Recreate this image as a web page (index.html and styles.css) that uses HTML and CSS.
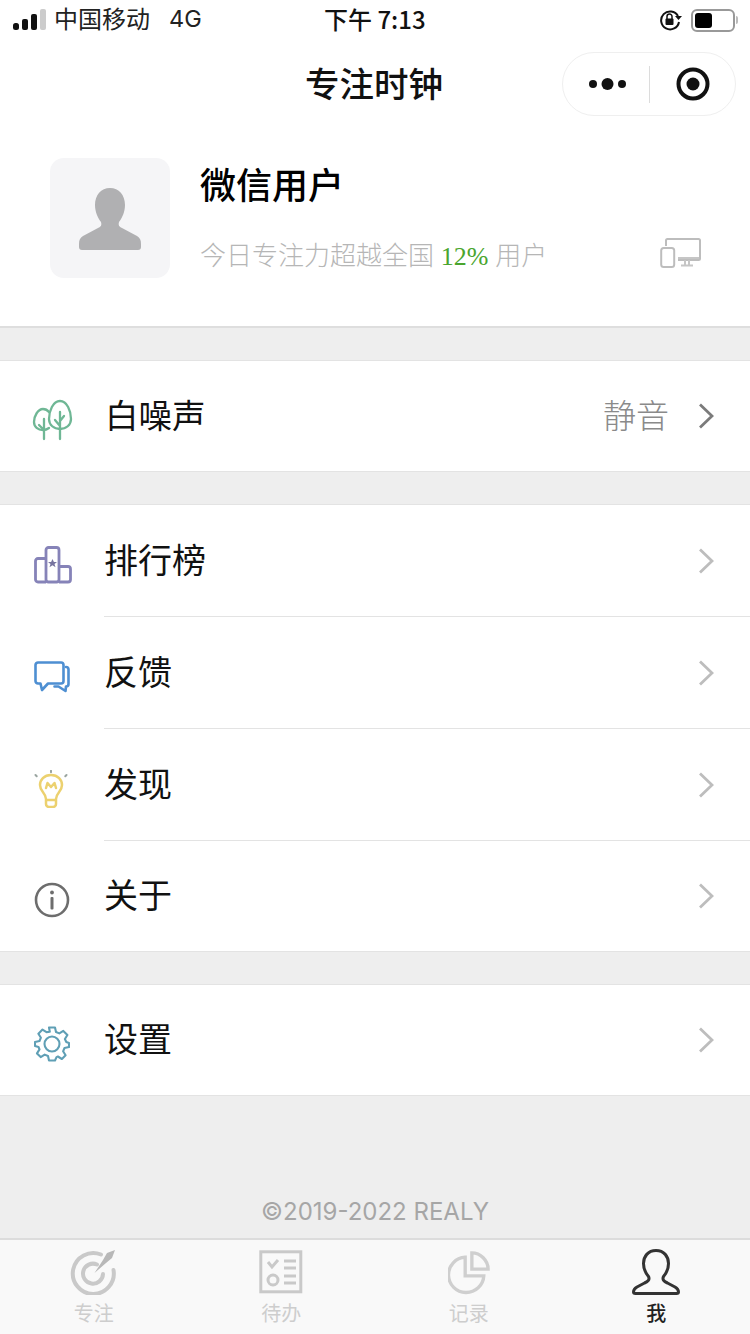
FILE: index.html
```html
<!DOCTYPE html>
<html lang="zh">
<head>
<meta charset="utf-8">
<title>专注时钟</title>
<link rel="stylesheet" href="styles.css">
</head>
<body>
<div class="page">
  <header class="status">
    <div class="status-left">
      <svg class="signal" width="34" height="22" viewBox="0 0 34 22"><rect x="0" y="14" width="6" height="7" rx="2.5" fill="#111"/><rect x="9" y="10" width="6" height="11" rx="2" fill="#111"/><rect x="18" y="5" width="6" height="16" rx="2" fill="#111"/><rect x="27" y="0" width="6" height="21" rx="2" fill="#ccc"/></svg>
      <span class="carrier">中国移动</span><span class="net">4G</span>
    </div>
    <span class="clock">下午 7:13</span>
    <div class="status-right">
      <svg width="24" height="22" viewBox="0 0 24 22"><path d="M19 7A9 9 0 1 0 20 13" fill="none" stroke="#111" stroke-width="2"/><path d="M16 7h7l-3.500 4z" fill="#111"/><rect x="6.500" y="9.500" width="8" height="6.500" rx="1" fill="#111"/><path d="M8 10V7.500a2.500 2.500 0 0 1 5 0V10" fill="none" stroke="#111" stroke-width="1.500"/></svg>
      <div class="battery"><div class="battery-fill"></div></div><div class="battery-tip"></div>
    </div>
  </header>
  <nav class="nav">
    <h1 class="nav-title">专注时钟</h1>
    <div class="capsule">
      <svg width="40" height="16" viewBox="0 0 40 16"><circle cx="5" cy="8" r="4" fill="#111"/><circle cx="19.500" cy="8" r="6" fill="#111"/><circle cx="34" cy="8" r="4" fill="#111"/></svg>
      <span class="capsule-line"></span>
      <svg width="34" height="34" viewBox="0 0 34 34"><circle cx="17" cy="17" r="14.500" fill="none" stroke="#111" stroke-width="4"/><circle cx="17" cy="17" r="6.500" fill="#111"/></svg>
    </div>
  </nav>
  <section class="profile">
    <div class="avatar">
      <svg width="62" height="62" viewBox="0 0 62 62"><path d="M31 0c9 0 15 7 15 17 0 7-3 13-6 17-1 3 0 5 3 6l15 8c3 2 4 4 4 8v3c0 2-1 3-3 3H3c-2 0-3-1-3-3v-3c0-4 1-6 4-8l15-8c3-1 4-3 3-6-3-4-6-10-6-17C16 7 22 0 31 0z" fill="#b0b0b2"/></svg>
    </div>
    <div class="profile-info">
      <div class="name">微信用户</div>
      <div class="sub">今日专注力超越全国 <span class="pct">12%</span> 用户</div>
    </div>
    <svg class="devices" width="42" height="32" viewBox="0 0 42 32"><path d="M6 8V2.500a1.500 1.500 0 0 1 1.500-1.500h31A1.500 1.500 0 0 1 40 2.500v18a1.500 1.500 0 0 1-1.500 1.500H18" fill="none" stroke="#bdbdbd" stroke-width="2"/><rect x="1.200" y="10" width="13" height="19" rx="2.500" fill="#fff" stroke="#bdbdbd" stroke-width="2"/><path d="M18 20h21M21 27.500h12M25 22v5M29 22v5" stroke="#c6c6c6" stroke-width="2" fill="none"/></svg>
  </section>
  <section class="group">
    <div class="row row-wide">
      <svg class="icon icon-tree" width="42" height="42" viewBox="0 0 42 42"><g fill="none" stroke="#6fb795" stroke-width="2.300" stroke-linecap="round" stroke-linejoin="round"><path d="M28 2C21 2 17 12 17 20c0 6 5 10 11 10s11-4 11-10C39 12 35 2 28 2z"/><path d="M28 13v27M28 27l-5-6M28 22l4-5"/><path d="M17 13c-2-2.500-4-3-6-3C6 10 2 17 2 23c0 5 4 8 9 8 2 0 4-.5 6-2"/><path d="M12 20v20M12 31l-5-5"/></g></svg>
      <span class="label label-noise">白噪声</span>
      <span class="value">静音</span>
      <svg class="chev chev-dark" width="16" height="26" viewBox="0 0 16 26"><path d="M2 1.500 14 13 2 24.500" fill="none" stroke="currentColor" stroke-width="2.800"/></svg>
    </div>
  </section>
  <section class="group">
    <div class="row">
      <svg class="icon" width="38" height="38" viewBox="0 0 38 38"><g fill="none" stroke="#8683b8" stroke-width="2.800" stroke-linejoin="round"><path d="M12 36H4a2.500 2.500 0 0 1-2.500-2.500V15A2.500 2.500 0 0 1 4 12.500h8"/><rect x="12" y="1.500" width="13" height="34.500" rx="2.500"/><path d="M25 20.500h9a2.500 2.500 0 0 1 2.500 2.500v10.500A2.500 2.500 0 0 1 34 36h-9"/></g><path d="m18.500 13 1.400 3h3.100l-2.500 2 1 3.200-3-1.900-3 1.900 1-3.200-2.500-2h3.100z" fill="#77749f"/></svg>
      <span class="label">排行榜</span>
      <div class="row-line"></div>
      <svg class="chev" width="16" height="26" viewBox="0 0 16 26"><path d="M2 1.500 14 13 2 24.500" fill="none" stroke="currentColor" stroke-width="2.800"/></svg>
    </div>
    <div class="row">
      <svg class="icon" width="36" height="32" viewBox="0 0 36 32"><g fill="none" stroke="#4e8fd2" stroke-width="2.600" stroke-linejoin="round" stroke-linecap="round"><path d="M4 1.500h23A2.500 2.500 0 0 1 29.500 4v16a2.500 2.500 0 0 1-2.500 2.500H14L8 29l-1.500-6.500H4A2.500 2.500 0 0 1 1.500 20V4A2.500 2.500 0 0 1 4 1.500z"/><path d="M32 6a2.500 2.500 0 0 1 2.500 2.500V23a2.500 2.500 0 0 1-2.500 2.500l-.5 4.500-7-4.500h-4"/></g></svg>
      <span class="label">反馈</span>
      <div class="row-line"></div>
      <svg class="chev" width="16" height="26" viewBox="0 0 16 26"><path d="M2 1.500 14 13 2 24.500" fill="none" stroke="currentColor" stroke-width="2.800"/></svg>
    </div>
    <div class="row">
      <svg class="icon" width="34" height="38" viewBox="0 0 34 38"><g fill="none" stroke="#ecd16f" stroke-width="2.500" stroke-linecap="round" stroke-linejoin="round"><path d="M17 5C10 5 6 10 6 15c0 7 6 8 6 14v5a3 3 0 0 0 3 3h4a3 3 0 0 0 3-3v-5c0-6 6-7 6-14 0-5-4-10-11-10z"/><path d="M12 18l1.500-5 3.500 4 3.500-4 1.500 5"/><path d="M12.500 30h9"/></g><g stroke="#9aa5a0" stroke-width="2" stroke-linecap="round"><path d="M17 .8v1.400M1.500 5l1.200 1.200M32.500 5l-1.200 1.200"/></g></svg>
      <span class="label">发现</span>
      <div class="row-line"></div>
      <svg class="chev" width="16" height="26" viewBox="0 0 16 26"><path d="M2 1.500 14 13 2 24.500" fill="none" stroke="currentColor" stroke-width="2.800"/></svg>
    </div>
    <div class="row row-wide">
      <svg class="icon" width="36" height="36" viewBox="0 0 36 36"><circle cx="18" cy="18" r="16" fill="none" stroke="#6d6d6d" stroke-width="2.600"/><circle cx="18" cy="10.500" r="1.900" fill="#6d6d6d"/><rect x="16.500" y="15" width="3" height="12.500" rx="1" fill="#6d6d6d"/></svg>
      <span class="label">关于</span>
      <svg class="chev" width="16" height="26" viewBox="0 0 16 26"><path d="M2 1.500 14 13 2 24.500" fill="none" stroke="currentColor" stroke-width="2.800"/></svg>
    </div>
  </section>
  <section class="group">
    <div class="row row-wide">
      <svg class="icon" width="36" height="36" viewBox="0 0 36 36"><g fill="none" stroke="#5f9fb5" stroke-width="2.100" stroke-linejoin="round"><path d="M15 1.500h6l1 4.500 3.300 1.400 4-2.500 4.100 4.100-2.500 4L32.300 16l2.700 1v4l-4.500 1-1.400 3.300 2.500 4-3.700 3.700-4-2.500-1.400.6L21 34.500h-6l-1-4.500-3.300-1.400-4 2.500-3.700-3.700 2.500-4L4.500 21 1 20v-4l4.500-1 1.400-3.300-2.500-4 4.100-4.100 4 2.500L15.800 5.700z"/><circle cx="18" cy="18" r="7.500"/></g></svg>
      <span class="label">设置</span>
      <svg class="chev" width="16" height="26" viewBox="0 0 16 26"><path d="M2 1.500 14 13 2 24.500" fill="none" stroke="currentColor" stroke-width="2.800"/></svg>
    </div>
  </section>
  <footer class="foot">©2019-2022 REALY</footer>
  <div class="tabbar">
    <div class="tab">
      <svg width="48" height="46" viewBox="0 0 48 46"><g fill="none" stroke="#c9c9c9" stroke-width="4" stroke-linecap="round"><path d="M31 5.500A20.500 20.500 0 1 0 43.500 21"/><path d="M27 15.500A10 10 0 1 0 33 25"/></g><path d="M24.500 24 33 11l4-7 8-3-3 8-6 5z" fill="#b8b8b8"/></svg>
      <span class="tab-text">专注</span>
    </div>
    <div class="tab">
      <svg width="44" height="44" viewBox="0 0 44 44"><rect x="1.800" y="1.800" width="40" height="40" fill="none" stroke="#c9c9c9" stroke-width="3"/><g fill="none" stroke="#c9c9c9" stroke-width="3"><path d="M9 12l4 5 6-7"/><circle cx="14" cy="30" r="5"/><path d="M25 11h12M25 18h12M25 26h12M25 33h12"/></g></svg>
      <span class="tab-text">待办</span>
    </div>
    <div class="tab">
      <svg width="42" height="42" viewBox="0 0 44 44"><g fill="none" stroke="#cfcfcf" stroke-width="3.500"><path d="M18 6.500A18.500 18.500 0 1 0 37.500 26H18z"/><path d="M25 2c9 0 17 8 17 17H25z"/></g></svg>
      <span class="tab-text">记录</span>
    </div>
    <div class="tab tab-on">
      <svg width="48" height="46" viewBox="0 0 48 46"><path d="M24 1.500c-8 0-12.500 6-12.500 13 0 5 2.500 10 5 13 1.500 3-.5 5-4 6.500l-7.500 4C2.500 39.500 1.500 41.500 1.500 43c0 1 .5 1.500 2 1.500h41c1.500 0 2-.5 2-1.500 0-1.500-1-3.500-3.500-5l-7.500-4c-3.500-1.500-5.500-3.500-4-6.500 2.500-3 5-8 5-13 0-7-4.500-13-12.500-13z" fill="none" stroke="#333" stroke-width="3"/></svg>
      <span class="tab-text">我</span>
    </div>
  </div>
</div>
</body>
</html>
```
FILE: styles.css
```css
* { box-sizing: border-box; }
html, body { margin: 0; padding: 0; }
body { font-family: "Liberation Sans", "Noto Sans CJK SC", sans-serif; color: #111; background: #ededed; }
.page { width: 750px; height: 1334px; display: flex; flex-direction: column; overflow: hidden; background: #eee; }

.status { height: 42px; background: #fff; display: flex; align-items: center; justify-content: space-between; padding: 0 12px 2px 13px; position: relative; flex: none; }
.status-left { display: flex; align-items: center; font-size: 24px; color: #222; width: 270px; }
.signal { margin-right: 7px; }
.carrier { font-family: "Noto Sans CJK SC", sans-serif; line-height: 30px; margin-top: -4px; }
.net { margin-left: 19px; font-family: Inter, "Liberation Sans", sans-serif; font-size: 23.5px; line-height: 30px; margin-top: -2px; }
.clock { font-family: "Noto Sans CJK SC", "Liberation Sans", sans-serif; font-size: 24px; color: #111; position: absolute; left: 324px; top: 1px; line-height: 36px; font-weight: 500; }
.status-right { display: flex; align-items: center; }
.battery { width: 44px; height: 23px; border: 2px solid #999; border-radius: 6px; padding: 2px; margin-left: 8px; }
.battery-fill { width: 17px; height: 15px; background: #000; border-radius: 3px; }
.battery-tip { width: 2px; height: 8px; background: #bbb; margin-left: 1px; border-radius: 0 2px 2px 0; }

.nav { height: 88px; background: #fff; display: flex; align-items: center; justify-content: center; position: relative; flex: none; }
.nav-title { margin: 0 2px 8px 0; font-family: "Noto Sans CJK SC", sans-serif; font-size: 34.5px; font-weight: 500; color: #111; line-height: 48px; }
.capsule { position: absolute; left: 562px; top: 10px; width: 174px; height: 64px; border: 1px solid #efefef; border-radius: 32px; background: #fff; display: flex; align-items: center; padding-left: 25px; }
.capsule-line { width: 1px; height: 37px; background: #dcdcdc; margin: 0 26px 0 21px; }

.profile { height: 198px; background: #fff; border-bottom: 2px solid #dedede; padding: 0 50px 20px; display: flex; align-items: center; position: relative; flex: none; }
.avatar { width: 120px; height: 120px; border-radius: 14px; background: #f5f5f7; display: flex; align-items: center; justify-content: center; padding-top: 2px; flex: none; }
.profile-info { margin-left: 30px; flex: 1; }
.name { font-family: "Noto Sans CJK SC", sans-serif; font-size: 36px; font-weight: 500; color: #000; line-height: 50px; margin-bottom: 28.5px; margin-top: -3.5px; }
.sub { font-family: "Noto Sans CJK SC", sans-serif; font-size: 26px; font-weight: 300; color: #b6b6b6; line-height: 36px; }
.pct { font-family: "Liberation Serif", serif; color: #4aa52e; margin: 0 1px; }
.devices { position: absolute; left: 660px; top: 108px; }

.group { background: #fff; margin-top: 32px; border-top: 1px solid #e3e3e3; border-bottom: 1px solid #e3e3e3; flex: none; }
.row { height: 112px; display: flex; align-items: center; padding: 0 0 5px 34px; position: relative; }
.row-wide { height: 110px; }
.icon { position: absolute; left: 34px; top: 50%; transform: translateY(calc(-50% + 4px)); }
.icon-tree { left: 32px; }
.label { margin-left: 70px; font-family: "Noto Sans CJK SC", sans-serif; font-size: 34px; font-weight: 400; color: #111; flex: 1; }
.label-noise { margin-left: 71px; font-size: 33.5px; }
.value { font-family: "Noto Sans CJK SC", sans-serif; font-size: 33px; font-weight: 300; color: #8a8a8a; margin-right: 81px; }
.chev { position: absolute; left: 698px; top: 43px; color: #bdbdbd; }
.row-wide .chev { top: 42px; }
.chev-dark { color: #7b7b7b; }
.row-line { position: absolute; left: 104px; right: 0; bottom: 0; height: 1px; background: #e3e3e3; }

.foot { flex: 1; display: flex; align-items: flex-end; justify-content: center; padding-bottom: 12px; font-family: Inter, "Liberation Sans", sans-serif; font-size: 24px; color: #a6a6a6; }

.tabbar { height: 96px; background: #f9f9f9; border-top: 2px solid #dcdcdc; display: grid; grid-template-columns: repeat(4, 1fr); flex: none; padding: 9px 0 0; }
.tab { display: flex; flex-direction: column; align-items: center; }
.tab svg { height: 46px; }
.tab-text { font-family: "Noto Sans CJK SC", sans-serif; font-size: 20px; line-height: 30px; margin-top: 3px; color: #cdcdcd; }
.tab-on .tab-text { color: #222; font-weight: 500; }
```
